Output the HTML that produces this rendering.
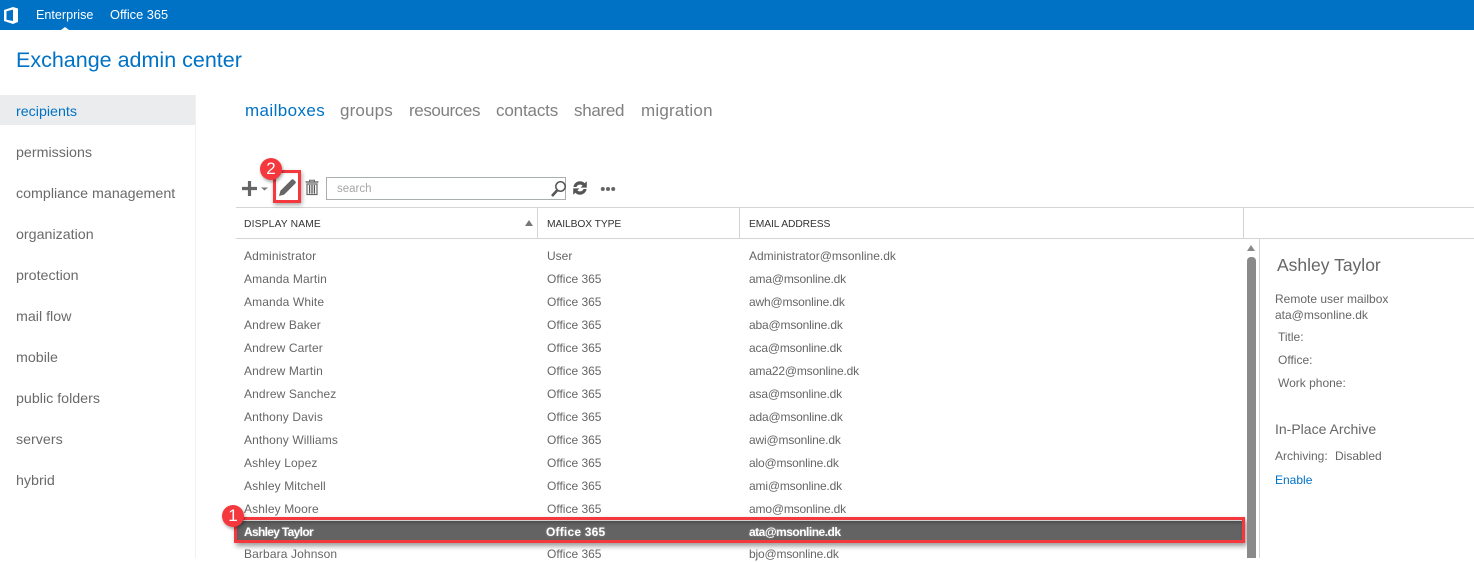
<!DOCTYPE html>
<html><head><meta charset="utf-8">
<style>
html,body{margin:0;padding:0;background:#fff}
body{width:1474px;height:558px;overflow:hidden;position:relative;font-family:"Liberation Sans",sans-serif;color:#666}
.a{position:absolute;white-space:nowrap}
.s{left:16px;font-size:14.25px;line-height:20px;color:#6a6a6a}
.n{top:100px;font-size:17px;line-height:22px;color:#808080}
.r{font-size:12px;line-height:16px;color:#666}
.nm{letter-spacing:.12px}
.em{letter-spacing:-.17px}
.h{top:218px;font-size:10.3px;line-height:14px;color:#333}
.d{font-size:12px;line-height:16px;color:#666}
.l{position:absolute;background:#d4d4d4}
.b{color:#fff;font-weight:bold;text-shadow:0 0 2px rgba(255,255,255,.35)}
</style></head><body>
<div class="a" style="left:0;top:0;width:1474px;height:30px;background:#0072c6"></div>
<svg class="a" style="left:0;top:0" width="24" height="30" viewBox="0 0 24 30"><path d="M4 10L13 7L18 8.5V22L13 24L4 21ZM6.5 11.2V19.8L13 21V9.6Z" fill="#fff" fill-rule="evenodd"/></svg>
<div class="a" style="left:36px;top:7px;font-size:12.6px;line-height:16px;color:#fff">Enterprise</div>
<div class="a" style="left:110px;top:7px;font-size:12.8px;line-height:16px;color:#fff">Office 365</div>
<div class="a" style="left:61px;top:27px;width:0;height:0;border-left:4px solid transparent;border-right:4px solid transparent;border-bottom:3px solid #fff"></div>

<div class="a" style="left:16px;top:46px;font-size:21.5px;line-height:28px;color:#0072c6">Exchange admin center</div>

<div class="a" style="left:0;top:95px;width:195px;height:30px;background:#ebecee"></div>
<div class="a" style="left:195px;top:95px;width:1px;height:463px;background:#f1f1f1"></div>
<div class="a s" style="top:102px;color:#0072c6">recipients</div>
<div class="a s" style="top:143px">permissions</div>
<div class="a s" style="top:184px">compliance management</div>
<div class="a s" style="top:225px">organization</div>
<div class="a s" style="top:266px">protection</div>
<div class="a s" style="top:307px">mail flow</div>
<div class="a s" style="top:348px">mobile</div>
<div class="a s" style="top:389px">public folders</div>
<div class="a s" style="top:430px">servers</div>
<div class="a s" style="top:471px">hybrid</div>

<div class="a n" style="left:245px;color:#0072c6;letter-spacing:.4px">mailboxes</div>
<div class="a n" style="left:340px;letter-spacing:.15px">groups</div>
<div class="a n" style="left:409px;letter-spacing:-.4px">resources</div>
<div class="a n" style="left:496px;letter-spacing:-.15px">contacts</div>
<div class="a n" style="left:574px;letter-spacing:-.3px">shared</div>
<div class="a n" style="left:641px;letter-spacing:.2px">migration</div>

<!-- toolbar -->
<svg class="a" style="left:240px;top:178px" width="32" height="20" viewBox="0 0 32 20"><path d="M2 10.5H17M9.5 3V18" stroke="#666" stroke-width="3.2" fill="none"/><path d="M21 9.5H28L24.5 12.5Z" fill="#777"/></svg>
<svg class="a" style="left:277px;top:176px" width="22" height="22" viewBox="0 0 22 22"><path d="M2 20L3.4 14.8L14.4 3.8C15.2 3.1 16 3.1 16.7 3.7L18.3 5.3C19 6 19 6.8 18.2 7.6L7.2 18.6Z" fill="#666"/></svg>
<svg class="a" style="left:304px;top:179px" width="16" height="17" viewBox="0 0 16 17"><path d="M1.5 3H14.5" stroke="#666" stroke-width="1.4"/><path d="M5.5 2.5V1.2H10.5V2.5" stroke="#666" stroke-width="1" fill="none"/><path d="M3 5H13V15.5H3Z" fill="none" stroke="#666" stroke-width="1.2"/><path d="M5.6 6V14.5M8 6V14.5M10.4 6V14.5" stroke="#555" stroke-width="1.3"/></svg>
<div class="a" style="left:326px;top:177px;width:238px;height:21px;border:1px solid #a9afaf;background:#fff"></div>
<div class="a" style="left:337px;top:182px;font-size:11.5px;line-height:14px;color:#a6a6a6">search</div>
<svg class="a" style="left:550px;top:180px" width="17" height="18" viewBox="0 0 17 18"><circle cx="10.5" cy="6.5" r="4.7" fill="none" stroke="#555" stroke-width="1.5"/><path d="M7 10.5L2 16" stroke="#555" stroke-width="2.6"/></svg>
<svg class="a" style="left:572px;top:180px" width="16" height="16" viewBox="0 0 16 16"><path d="M1.4 7C2 3.6 4.6 1.3 8 1.3C9.9 1.3 11.5 2.1 12.6 3.3L14.8 1.2V7.6H8.6L10.6 5.6C9.9 4.9 9.1 4.6 8 4.6C6.2 4.6 5 5.6 4.5 7Z" fill="#555"/><path d="M14.6 9C14 12.4 11.4 14.7 8 14.7C6.1 14.7 4.5 13.9 3.4 12.7L1.2 14.8V8.4H7.4L5.4 10.4C6.1 11.1 6.9 11.4 8 11.4C9.8 11.4 11 10.4 11.5 9Z" fill="#555"/></svg>
<svg class="a" style="left:600px;top:185px" width="16" height="8" viewBox="0 0 16 8"><circle cx="2.8" cy="4" r="2" fill="#666"/><circle cx="8" cy="4" r="2" fill="#666"/><circle cx="13.2" cy="4" r="2" fill="#666"/></svg>

<!-- header -->
<div class="l" style="left:236px;top:207px;width:1238px;height:1px"></div>
<div class="l" style="left:236px;top:238px;width:1238px;height:1px"></div>
<div class="l" style="left:537px;top:208px;width:1px;height:30px"></div>
<div class="l" style="left:739px;top:208px;width:1px;height:30px"></div>
<div class="l" style="left:1243px;top:208px;width:1px;height:30px"></div>
<div class="a h" style="left:244px;letter-spacing:.15px">DISPLAY NAME</div>
<div class="a h" style="left:547px;letter-spacing:-.1px">MAILBOX TYPE</div>
<div class="a h" style="left:749px;letter-spacing:-.1px">EMAIL ADDRESS</div>
<div class="a" style="left:525px;top:220px;width:0;height:0;border-left:4px solid transparent;border-right:4px solid transparent;border-bottom:6px solid #777"></div>

<!-- rows -->
<div class="a r nm" style="left:244px;top:248px">Administrator</div><div class="a r" style="left:547px;top:248px">User</div><div class="a r" style="left:749px;top:248px">Administrator@msonline.dk</div>
<div class="a r nm" style="left:244px;top:271px">Amanda Martin</div><div class="a r" style="left:547px;top:271px">Office 365</div><div class="a r em" style="left:749px;top:271px">ama@msonline.dk</div>
<div class="a r nm" style="left:244px;top:294px">Amanda White</div><div class="a r" style="left:547px;top:294px">Office 365</div><div class="a r em" style="left:749px;top:294px">awh@msonline.dk</div>
<div class="a r nm" style="left:244px;top:317px">Andrew Baker</div><div class="a r" style="left:547px;top:317px">Office 365</div><div class="a r em" style="left:749px;top:317px">aba@msonline.dk</div>
<div class="a r nm" style="left:244px;top:340px">Andrew Carter</div><div class="a r" style="left:547px;top:340px">Office 365</div><div class="a r em" style="left:749px;top:340px">aca@msonline.dk</div>
<div class="a r nm" style="left:244px;top:363px">Andrew Martin</div><div class="a r" style="left:547px;top:363px">Office 365</div><div class="a r em" style="left:749px;top:363px">ama22@msonline.dk</div>
<div class="a r nm" style="left:244px;top:386px">Andrew Sanchez</div><div class="a r" style="left:547px;top:386px">Office 365</div><div class="a r em" style="left:749px;top:386px">asa@msonline.dk</div>
<div class="a r nm" style="left:244px;top:409px">Anthony Davis</div><div class="a r" style="left:547px;top:409px">Office 365</div><div class="a r em" style="left:749px;top:409px">ada@msonline.dk</div>
<div class="a r nm" style="left:244px;top:432px">Anthony Williams</div><div class="a r" style="left:547px;top:432px">Office 365</div><div class="a r em" style="left:749px;top:432px">awi@msonline.dk</div>
<div class="a r nm" style="left:244px;top:455px">Ashley Lopez</div><div class="a r" style="left:547px;top:455px">Office 365</div><div class="a r em" style="left:749px;top:455px">alo@msonline.dk</div>
<div class="a r nm" style="left:244px;top:478px">Ashley Mitchell</div><div class="a r" style="left:547px;top:478px">Office 365</div><div class="a r em" style="left:749px;top:478px">ami@msonline.dk</div>
<div class="a r nm" style="left:244px;top:501px">Ashley Moore</div><div class="a r" style="left:547px;top:501px">Office 365</div><div class="a r em" style="left:749px;top:501px">amo@msonline.dk</div>
<div class="a r nm" style="left:244px;top:546px">Barbara Johnson</div><div class="a r" style="left:547px;top:546px">Office 365</div><div class="a r em" style="left:749px;top:546px">bjo@msonline.dk</div>

<!-- selected row -->
<div class="a" style="left:234px;top:517px;width:1011px;height:26px;box-sizing:border-box;border:3px solid #f5383e;background:#636363;box-shadow:2px 3px 5px rgba(0,0,0,.4),inset 0 1px 0 #cfcfcf,inset 0 4px 4px -2px rgba(0,0,0,.35)"></div>
<div class="a r b" style="left:244px;top:524px;letter-spacing:-.68px">Ashley Taylor</div>
<div class="a r b" style="left:546px;top:524px;letter-spacing:.2px">Office 365</div>
<div class="a r b" style="left:749px;top:524px;letter-spacing:-.5px">ata@msonline.dk</div>

<!-- scrollbar -->
<div class="a" style="left:1247px;top:245px;width:0;height:0;border-left:4.5px solid transparent;border-right:4.5px solid transparent;border-bottom:6px solid #888"></div>
<div class="a" style="left:1247px;top:257px;width:9px;height:301px;background:#8a8a8a;border-radius:4px 4px 0 0"></div>
<div class="l" style="left:1259px;top:239px;width:1px;height:319px"></div>

<!-- detail pane -->
<div class="a" style="left:1277px;top:254px;font-size:17.5px;line-height:22px;color:#666">Ashley Taylor</div>
<div class="a d" style="left:1275px;top:291px">Remote user mailbox</div>
<div class="a d" style="left:1275px;top:307px">ata@msonline.dk</div>
<div class="a d" style="left:1278px;top:329px">Title:</div>
<div class="a d" style="left:1278px;top:352px">Office:</div>
<div class="a d" style="left:1278px;top:375px">Work phone:</div>
<div class="a" style="left:1275px;top:420px;font-size:14px;line-height:18px;color:#666">In-Place Archive</div>
<div class="a d" style="left:1275px;top:448px">Archiving:</div>
<div class="a d" style="left:1335px;top:448px">Disabled</div>
<div class="a d" style="left:1275px;top:472px;color:#0072c6">Enable</div>

<!-- callouts -->
<div class="a" style="left:273px;top:170px;width:28px;height:33px;box-sizing:border-box;border:3px solid #f5383e;box-shadow:1px 2px 4px rgba(0,0,0,.35),inset 1px 1px 2px rgba(0,0,0,.08)"></div>
<div class="a" style="left:260px;top:158px;width:22px;height:22px;border-radius:50%;background:#f5383e;box-shadow:1px 2px 3px rgba(0,0,0,.35);color:#fff;font-size:17px;line-height:22px;text-align:center">2</div>
<div class="a" style="left:222px;top:505px;width:22px;height:22px;border-radius:50%;background:#f5383e;box-shadow:1px 2px 3px rgba(0,0,0,.35);color:#fff;font-size:17px;line-height:22px;text-align:center">1</div>
</body></html>
